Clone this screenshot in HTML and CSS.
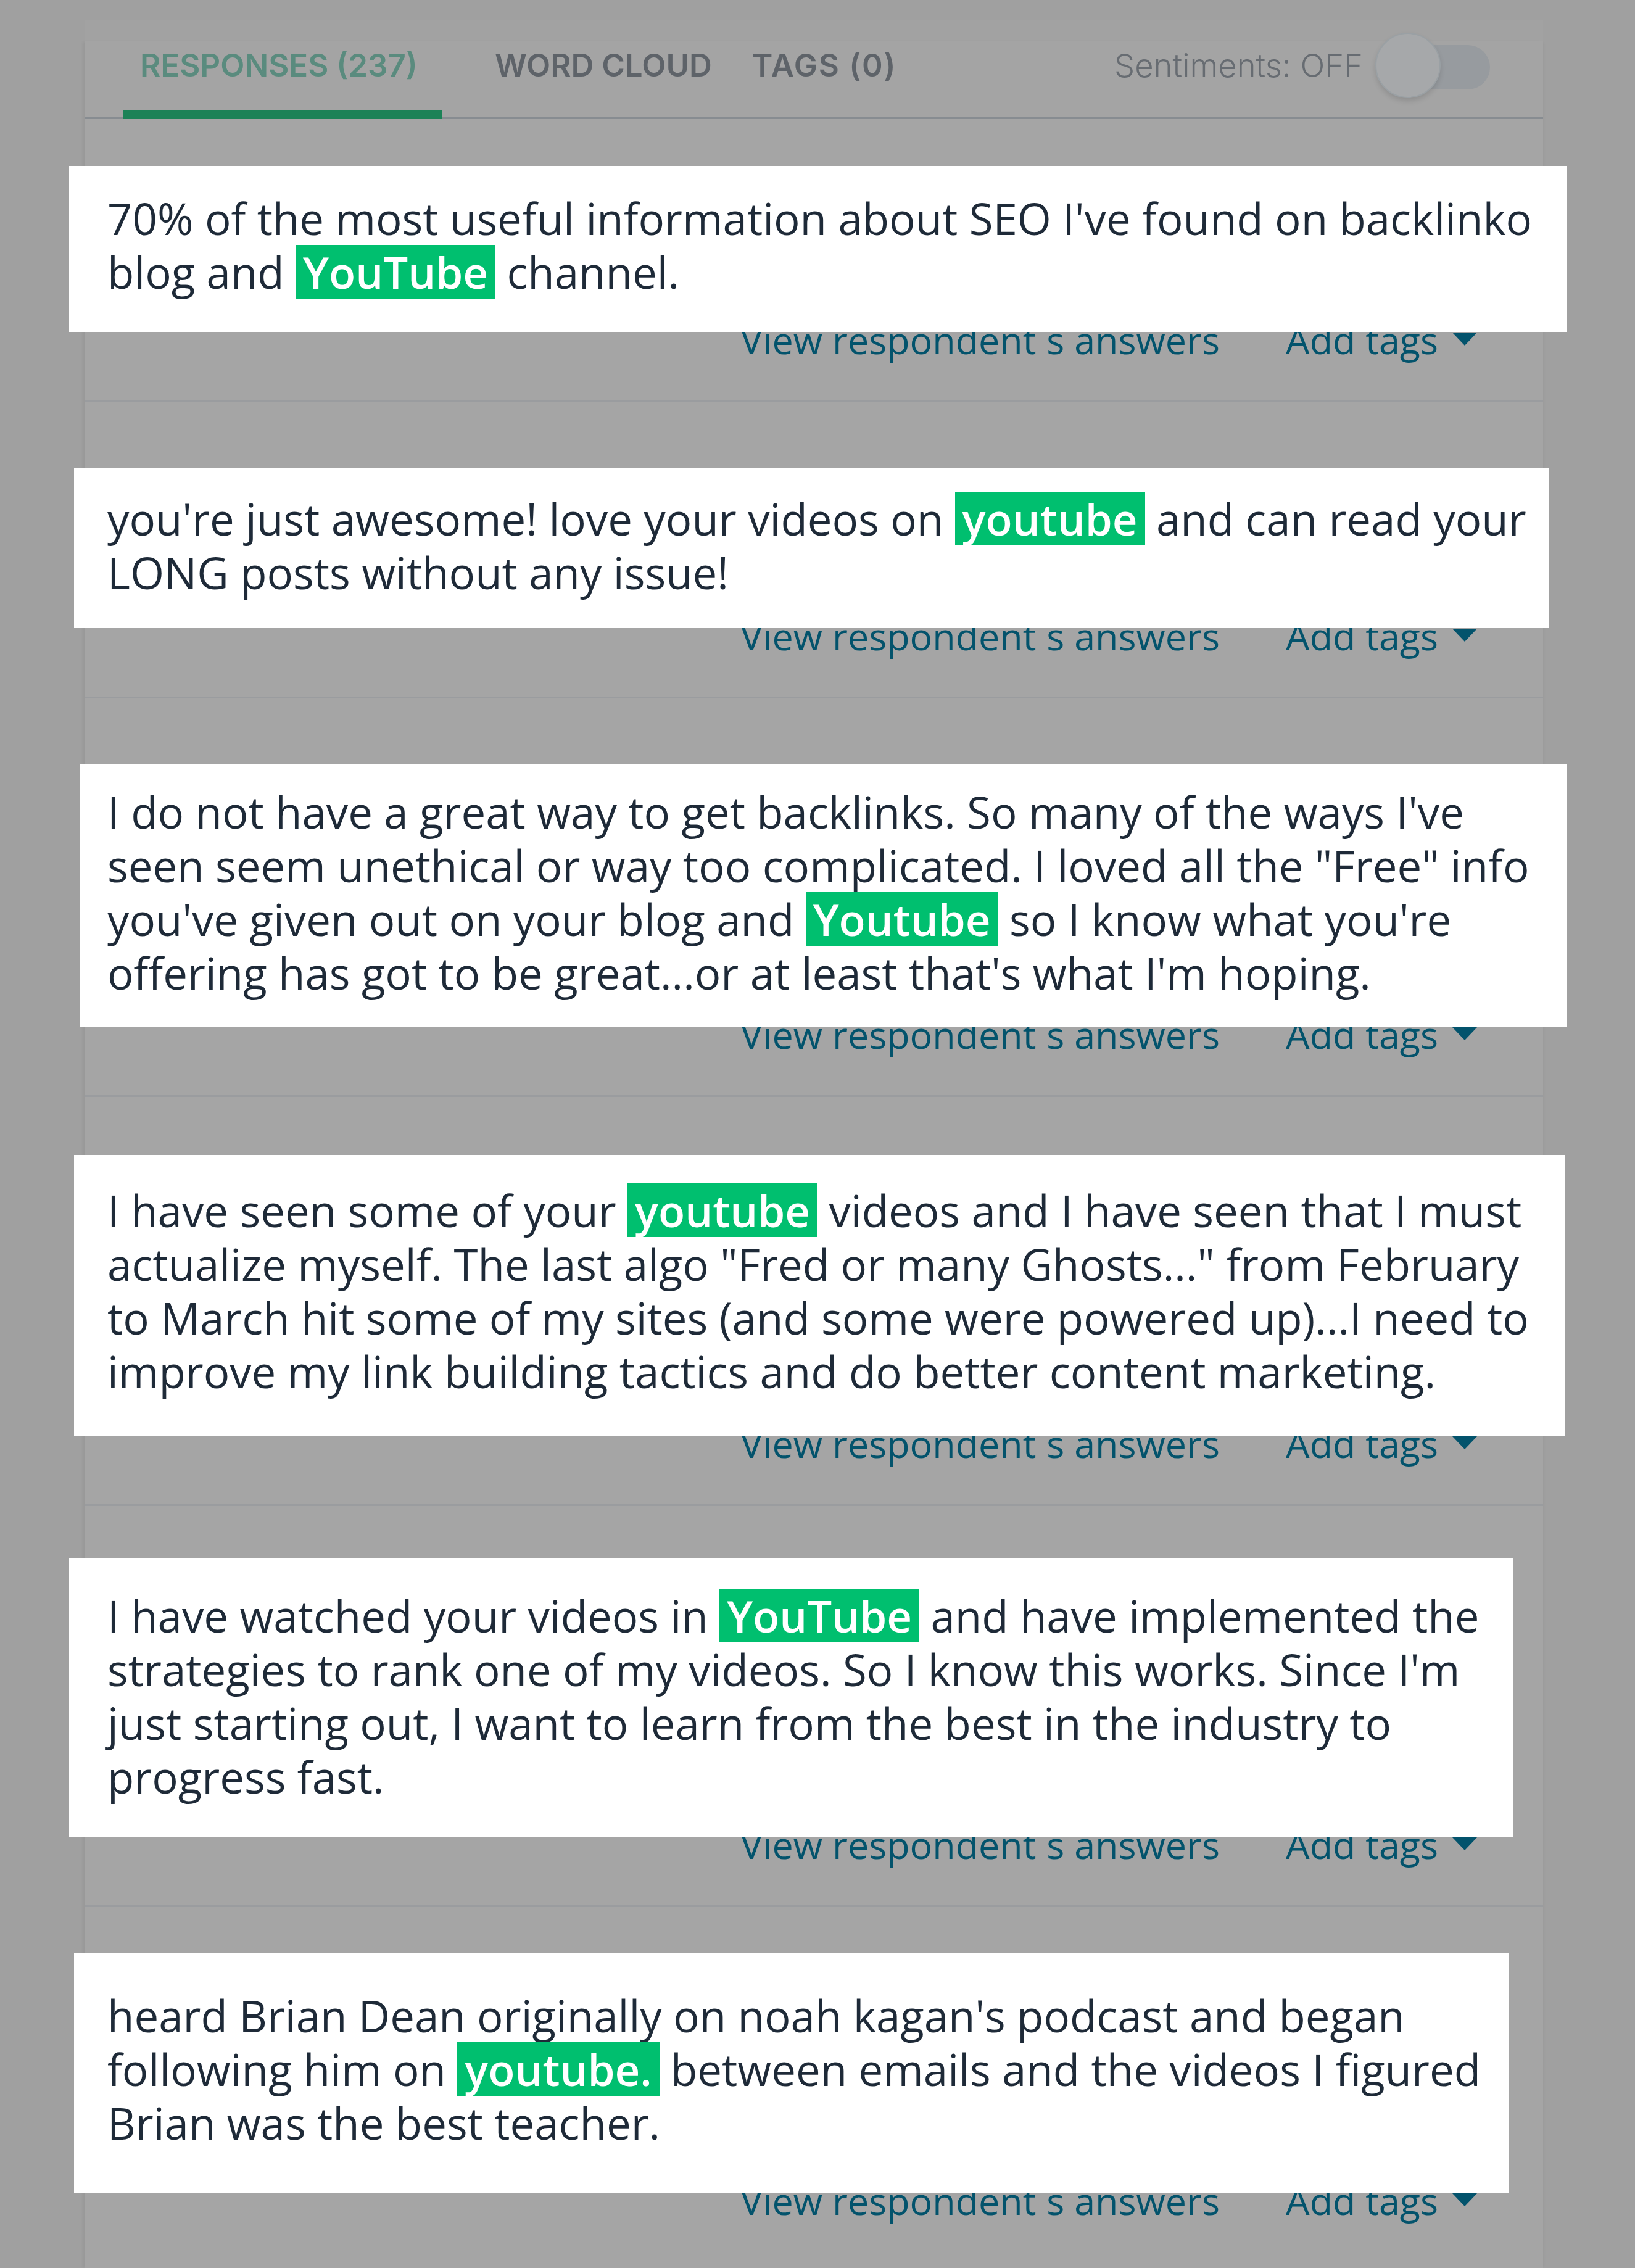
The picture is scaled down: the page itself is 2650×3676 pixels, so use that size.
FILE: index.html
```html
<!DOCTYPE html>
<html lang="en">
<head>
<meta charset="utf-8">
<title>Responses</title>
<link rel="stylesheet" href="styles.css">
</head>
<body>
<div class="panel">
  <div class="header">
    <div class="tab tab--active">RESPONSES (237)</div>
    <div class="tab tab--words">WORD CLOUD</div>
    <div class="tab tab--tags">TAGS (0)</div>
    <div class="sentiments">
      <span class="sentiments__label">Sentiments: OFF</span>
      <div class="toggle">
        <div class="toggle__track"></div>
        <div class="toggle__knob"></div>
      </div>
    </div>
  </div>

  <div class="row row--1">
    <div class="card c1">70% of the most useful information about SEO I've found on backlinko<br>blog and <span class="hl">YouTube</span> channel.</div>
    <div class="links"><span>View respondent´s answers</span><span>Add tags<span class="caret"></span></span></div>
  </div>

  <div class="row row--2">
    <div class="card c2">you're just awesome! love your videos on <span class="hl">youtube</span> and can read your<br>LONG posts without any issue!</div>
    <div class="links"><span>View respondent´s answers</span><span>Add tags<span class="caret"></span></span></div>
  </div>

  <div class="row row--3">
    <div class="card c3">I do not have a great way to get backlinks. So many of the ways I've<br>seen seem unethical or way too complicated. I loved all the "Free" info<br>you've given out on your blog and <span class="hl">Youtube</span> so I know what you're<br>offering has got to be great...or at least that's what I'm hoping.</div>
    <div class="links"><span>View respondent´s answers</span><span>Add tags<span class="caret"></span></span></div>
  </div>

  <div class="row row--4">
    <div class="card c4">I have seen some of your <span class="hl">youtube</span> videos and I have seen that I must<br>actualize myself. The last algo "Fred or many Ghosts..." from February<br>to March hit some of my sites (and some were powered up)...I need to<br>improve my link building tactics and do better content marketing.</div>
    <div class="links"><span>View respondent´s answers</span><span>Add tags<span class="caret"></span></span></div>
  </div>

  <div class="row row--5">
    <div class="card c5">I have watched your videos in <span class="hl">YouTube</span> and have implemented the<br>strategies to rank one of my videos. So I know this works. Since I'm<br>just starting out, I want to learn from the best in the industry to<br>progress fast.</div>
    <div class="links"><span>View respondent´s answers</span><span>Add tags<span class="caret"></span></span></div>
  </div>

  <div class="row row--6">
    <div class="card c6">heard Brian Dean originally on noah kagan's podcast and began<br>following him on <span class="hl">youtube.</span> between emails and the videos I figured<br>Brian was the best teacher.</div>
    <div class="links"><span>View respondent´s answers</span><span>Add tags<span class="caret"></span></span></div>
  </div>
</div>
</body>
</html>
```
FILE: styles.css
```css
html, body {
  margin: 0;
  padding: 0;
}
body {
  background: #a0a0a0;
  height: 3676px;
  overflow: hidden;
}

.panel {
  margin: 67px 0 0 138px;
  width: 2363px;
  min-height: 3609px;
  background: #a5a5a5;
  box-shadow: -5px 0 4px -1px rgba(0, 0, 0, 0.05),
              3px 0 4px -2px rgba(0, 0, 0, 0.04),
              0 -34px 0 0 #a2a2a2;
}

/* ---------- header / tabs ---------- */
.header {
  height: 123px;
  background: #a4a4a4;
  border-bottom: 3px solid #878c91;
  display: flex;
  align-items: flex-start;
}
.tab {
  font-family: "Inter", "Open Sans", sans-serif;
  font-weight: 600;
  font-size: 51px;
  line-height: 60px;
  color: #5e6369;
  padding: 9px 0 43px;
  margin-bottom: -3px;
  white-space: nowrap;
}
.tab--active {
  color: #5a8b7e;
  margin-left: 61px;
  padding: 9px 40px 43px 28px;
  border-bottom: 14px solid #1c8257;
}
.tab--words {
  margin-left: 85px;
}
.tab--tags {
  margin-left: 65px;
  letter-spacing: 1.8px;
}

.sentiments {
  margin-left: auto;
  margin-right: 86px;
  display: flex;
  align-items: flex-start;
}
.sentiments__label {
  font-family: "Inter", "Open Sans", sans-serif;
  font-weight: 300;
  font-size: 52.5px;
  line-height: 60px;
  color: #676c72;
  padding-top: 9px;
  white-space: nowrap;
}
.toggle {
  position: relative;
  width: 186px;
  height: 108px;
  margin: -14px 0 0 20px;
}
.toggle__track {
  margin: 20px 0 0 16px;
  width: 170px;
  height: 72px;
  border-radius: 36px;
  background: #979b9f;
}
.toggle__knob {
  position: absolute;
  left: 0;
  top: 0;
  width: 102px;
  height: 102px;
  border-radius: 50%;
  background: #a6a8aa;
  border: 2px solid #9aa0a4;
  box-shadow: 0 5px 8px rgba(0, 0, 0, 0.12);
}

/* ---------- response rows ---------- */
.row {
  padding-bottom: 58px;
  border-bottom: 3px solid #9a9c9f;
}
.row--1 { padding-top: 76px; }
.row--2 { padding-top: 106px; }
.row--3 { padding-top: 106px; }
.row--4 { padding-top: 94px; }
.row--5 { padding-top: 84px; }
.row--6 { padding-top: 75px; border-bottom: none; }

.card {
  position: relative;
  z-index: 1;
  background: #ffffff;
  font-family: "Open Sans", "Noto Sans", sans-serif;
  font-size: 70.8px;
  line-height: 87px;
  color: #1e2a38;
  white-space: nowrap;
}
.c1 { margin: 0 -39px 0 -26px; padding: 41px 0 54px 62px; }
.c2 { margin: 0 -10px 0 -18px; padding: 39px 0 47px 54px; }
.c3 { margin: 0 -39px 0 -9px;  padding: 34px 0 44px 45px; }
.c4 { margin: 0 -36px 0 -18px; padding: 46px 0 61px 54px; }
.c5 { margin: 0 48px 0 -26px;  padding: 50px 0 54px 62px; }
.c6 { margin: 0 56px 0 -18px;  padding: 57px 0 70px 54px; }

.hl {
  display: inline-block;
  background: #00bf6f;
  color: #ffffff;
  font-weight: 600;
  padding: 0 12px;
  line-height: 87px;
}

.links {
  margin-top: -27px;
  display: flex;
  justify-content: flex-end;
  align-items: baseline;
  gap: 107px;
  padding-right: 107px;
  font-family: "Open Sans", "Noto Sans", sans-serif;
  font-size: 61px;
  line-height: 80px;
  color: #03536c;
  white-space: nowrap;
}
.caret {
  display: inline-block;
  width: 0;
  height: 0;
  margin-left: 23px;
  border-left: 20px solid transparent;
  border-right: 20px solid transparent;
  border-top: 21px solid currentColor;
  vertical-align: 14px;
}
```
